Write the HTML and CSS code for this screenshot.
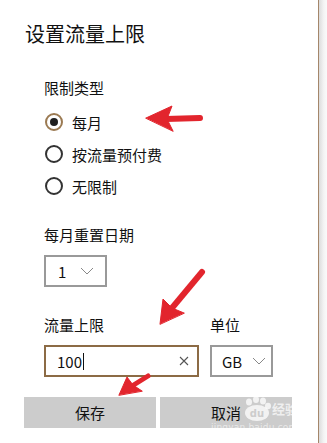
FILE: index.html
```html
<!DOCTYPE html>
<html lang="zh-CN">
<head>
<meta charset="utf-8">
<link rel="stylesheet" href="styles.css">
</head>
<body>
<div class="frame">
  <div class="panel">
    <h1 class="title">设置流量上限</h1>
    <div class="body">
      <div class="label first">限制类型</div>
      <div class="radios">
        <div class="radio-row"><span class="radio checked"></span><span>每月</span></div>
        <div class="radio-row"><span class="radio"></span><span>按流量预付费</span></div>
        <div class="radio-row"><span class="radio"></span><span>无限制</span></div>
      </div>
      <div class="label reset">每月重置日期</div>
      <div class="select day">
        <span class="val">1</span>
        <svg class="chev" width="14" height="8" viewBox="0 0 14 8"><path d="M1 1 L7 7 L13 1" fill="none" stroke="#888" stroke-width="1"/></svg>
      </div>
      <div class="limit-row">
        <div class="col">
          <div class="label">流量上限</div>
          <div class="input">
            <span class="val">100</span><span class="caret"></span>
            <svg class="clear" width="10" height="10" viewBox="0 0 10 10"><path d="M1 1 L9 9 M9 1 L1 9" stroke="#555" stroke-width="1.1"/></svg>
          </div>
        </div>
        <div class="col">
          <div class="label">单位</div>
          <div class="select unit">
            <span class="val">GB</span>
            <svg class="chev" width="14" height="8" viewBox="0 0 14 8"><path d="M1 1 L7 7 L13 1" fill="none" stroke="#888" stroke-width="1"/></svg>
          </div>
        </div>
      </div>
    </div>
    <div class="buttons">
      <div class="btn"><span>保存</span></div>
      <div class="btn"><span>取消</span></div>
    </div>
  </div>
  <div class="shadow"></div>
</div>

<svg class="arrows" width="327" height="443" viewBox="0 0 327 443">
  <g fill="#e2252d" stroke="#e2252d" stroke-linecap="round">
    <line x1="166" y1="119" x2="200" y2="118" stroke-width="6"/>
    <polygon points="146,118 172,106 167,119 173,131" stroke-width="1"/>
    <line x1="202" y1="272" x2="172" y2="308" stroke-width="6"/>
    <polygon points="160,324 163,299 172,308 184,313" stroke-width="1"/>
    <line x1="148" y1="376" x2="132" y2="386" stroke-width="5"/>
    <polygon points="119,395 127,377 133,385 142,391" stroke-width="1"/>
  </g>
</svg>

<div class="watermark">
  <svg class="paw" width="30" height="26" viewBox="0 0 30 26">
    <g fill="#fff" fill-opacity="0.75">
      <ellipse cx="7" cy="6" rx="3" ry="3.5"/>
      <ellipse cx="14" cy="3.5" rx="3" ry="3.5"/>
      <ellipse cx="21" cy="5" rx="3" ry="3.5"/>
      <ellipse cx="26" cy="10" rx="3" ry="3.2"/>
      <ellipse cx="15" cy="17" rx="12" ry="8"/>
    </g>
    <text x="15" y="21" text-anchor="middle" class="du">du</text>
  </svg>
  <span class="jy">经验</span>
  <span class="url">jingyan.baidu.com</span>
</div>
</body>
</html>
```

FILE: styles.css
```css
* { box-sizing: border-box; margin: 0; padding: 0; }
html, body { width: 327px; height: 443px; background: #fff; overflow: hidden; }
body {
  font-family: "Noto Sans CJK SC", "Noto Sans", sans-serif;
  color: #111;
  position: relative;
}
.frame { display: flex; height: 443px; }
.panel {
  width: 319px;
  border-right: 1px solid #a4866a;
  padding-left: 24px;
  background: #fff;
}
.shadow {
  flex: 1;
  background: linear-gradient(to right, #dcdcdc, #f4f4f4 60%, #fafafa);
}
.title {
  font-size: 20px;
  font-weight: normal;
  line-height: 28px;
  margin-top: 20px;
  padding-left: 1px;
}
.body { padding-left: 20px; }
.label { font-size: 15px; line-height: 20px; }
.label.first { margin-top: 30px; }
.radios { margin-top: 8px; display: flex; flex-direction: column; }
.radio-row {
  height: 32px;
  display: flex;
  align-items: center;
  gap: 9px;
  font-size: 15px;
  padding-left: 1px;
}
.radio {
  width: 18px; height: 18px;
  border: 2px solid #333;
  border-radius: 50%;
  display: flex; align-items: center; justify-content: center;
}
.radio.checked { border-color: #9b7a52; }
.radio.checked::after {
  content: "";
  width: 8px; height: 8px;
  border-radius: 50%;
  background: #1f1f1f;
}
.label.reset { margin-top: 23px; }
.select {
  margin-top: 10px;
  height: 32px;
  border: 2px solid #999;
  display: flex;
  align-items: center;
  font-size: 15px;
}
.select.day { width: 63px; padding-left: 12px; gap: 14px; }
.select.unit { width: 63px; padding-left: 10px; gap: 10px; }
.limit-row { display: flex; gap: 11px; margin-top: 28px; }
.input {
  margin-top: 10px;
  width: 155px;
  height: 32px;
  border: 2px solid #8c6b45;
  display: flex;
  align-items: center;
  padding-left: 11px;
  font-size: 15px;
}
.caret { width: 1px; height: 17px; background: #111; margin-left: 1px; }
.clear { margin-left: auto; margin-right: 8px; }
.buttons { display: flex; gap: 4px; margin-top: 20px; }
.btn {
  width: 132px;
  height: 31px;
  background: #cccccc;
  display: flex; align-items: center; justify-content: center;
  font-size: 15px;
  line-height: 16px;
}
.arrows { position: absolute; left: 0; top: 0; pointer-events: none; }
.watermark {
  position: absolute;
  left: 205px; top: 396px;
  width: 92px; height: 36px;
  pointer-events: none;
  white-space: nowrap;
}
.paw { position: absolute; left: 37px; top: 0; }
.du { font-family: "DejaVu Sans", sans-serif; font-size: 10px; font-weight: bold; fill: #ccc; }
.jy {
  position: absolute; left: 67px; top: 5px;
  font-size: 13px; line-height: 15px;
  color: rgba(255,255,255,0.7);
  font-weight: bold;
}
.url {
  position: absolute; left: 6px; top: 27px;
  font-family: "DejaVu Sans", sans-serif;
  font-size: 9px; line-height: 9px;
  color: rgba(255,255,255,0.6);
  letter-spacing: 0.2px;
}
```
